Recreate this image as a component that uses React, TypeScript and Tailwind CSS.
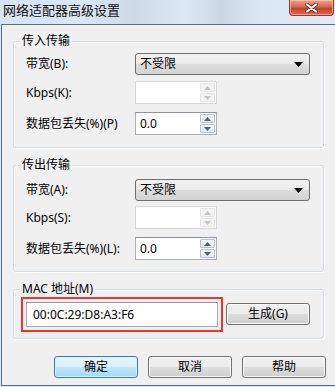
import React from "react";

const uiFont = "font-['Noto_Sans','Noto_Sans_CJK_SC',sans-serif]";

const Arrow = ({ up, color }: { up: boolean; color: string }) => (
  <svg width="7" height="4" viewBox="0 0 7 4">
    <path d={up ? "M0 4h7L3.5 0z" : "M0 0h7L3.5 4z"} fill={color} />
  </svg>
);

const ComboBox = () => (
  <div className="flex h-[22px] w-[175px] items-center justify-between rounded-[3px] border border-[#707070] bg-[linear-gradient(#f2f2f2_0%,#ebebeb_50%,#dddddd_51%,#d3d3d3_100%)] pl-[4px] pr-[6px]">
    <span className="leading-none">不受限</span>
    <svg width="9" height="5" viewBox="0 0 9 5">
      <path d="M0 0h9L4.5 5z" fill="#000" />
    </svg>
  </div>
);

const SpinBox = ({ value, disabled }: { value?: string; disabled?: boolean }) => {
  const arrowColor = disabled ? "#c4c4c4" : "#4c5f80";
  const btn = disabled
    ? "border-[#e3e3e3] bg-[#f4f4f4]"
    : "border-[#b9c2cf] bg-[linear-gradient(#f6f8fb,#e2e8f0)]";
  return (
    <div
      className={`flex h-[23px] w-[82px] border bg-white p-[1px] ${
        disabled ? "border-[#d6d6d6]" : "border-[#abadb3] border-t-[#8e939c]"
      }`}
    >
      <div className="flex-1 pl-[3px] leading-[19px]">{value}</div>
      <div className="flex w-[15px] flex-col gap-px">
        <div className={`flex flex-1 items-center justify-center rounded-[1px] border ${btn}`}>
          <Arrow up color={arrowColor} />
        </div>
        <div className={`flex flex-1 items-center justify-center rounded-[1px] border ${btn}`}>
          <Arrow up={false} color={arrowColor} />
        </div>
      </div>
    </div>
  );
};

const GroupBox = ({
  title,
  className,
  children,
}: {
  title: string;
  className: string;
  children: React.ReactNode;
}) => (
  <div
    className={`relative ml-[11px] w-[311px] rounded-[3px] border border-[#d5dfe5] shadow-[inset_1px_1px_0_#fff,1px_1px_0_#fff] ${className}`}
  >
    <span className="absolute -top-[9px] left-[6px] bg-[#f0f0f0] px-[2px] leading-[16px]">
      {title}
    </span>
    {children}
  </div>
);

const Row = ({ label, children, className = "" }: { label: string; children: React.ReactNode; className?: string }) => (
  <div className={`flex items-center ${className}`}>
    <span className="w-[121px] shrink-0 pl-[12px]">{label}</span>
    {children}
  </div>
);

const Button = ({ label, primary, className = "" }: { label: string; primary?: boolean; className?: string }) => (
  <div
    className={`flex h-[22px] w-[84px] items-center justify-center rounded-[3px] border ${
      primary
        ? "border-[#3c7fb1] bg-[linear-gradient(#eaf6fd_0%,#d9f0fc_50%,#bee6fd_51%,#a7d9f5_100%)] shadow-[inset_0_0_0_1px_#d4efff]"
        : "border-[#707070] bg-[linear-gradient(#f2f2f2_0%,#ebebeb_50%,#dddddd_51%,#cfcfcf_100%)] shadow-[inset_0_0_0_1px_#fbfbfb]"
    } ${className}`}
  >
    {label}
  </div>
);

export default function App() {
  return (
    <div className={`flex h-[387px] w-[335px] flex-col overflow-hidden bg-[#dbe7f5] text-[12px] text-black ${uiFont}`}>
      {/* title bar */}
      <div className="flex h-[24px] items-start justify-between bg-[linear-gradient(90deg,#d6e4f4_0%,#dbe7f5_25%,#ced9e6_40%,#dde8f5_55%,#ccd7e4_66%,#dbe7f5_78%,#dfeaf7_100%)]">
        <span className="pl-[3px] pt-[3px] text-[13px] leading-[15px] text-[#111]">网络适配器高级设置</span>
        <div className="mr-[1px] flex h-[16px] w-[45px] items-center justify-center rounded-b-[4px] border border-t-0 border-[#8e3a2c] bg-[linear-gradient(#e9a08e_0%,#d76a52_45%,#c2432a_55%,#d56b4f_100%)] shadow-[inset_0_0_0_1px_rgba(255,220,200,0.5)]">
          <svg width="13" height="10" viewBox="0 0 13 10">
            <path
              d="M2 1.5 L11 8.5 M11 1.5 L2 8.5"
              stroke="#5a2418"
              strokeWidth="3.6"
              strokeLinecap="round"
            />
            <path
              d="M2 1.5 L11 8.5 M11 1.5 L2 8.5"
              stroke="#fff"
              strokeWidth="2.2"
              strokeLinecap="round"
            />
          </svg>
        </div>
      </div>

      {/* client area */}
      <div className="ml-[1px] flex h-[362px] flex-col border-y border-l border-[#5d6b7d] bg-[#f0f0f0]">
        <GroupBox title="传入传输" className="mt-[16px] h-[107px] pt-[11px]">
          <Row label="带宽(B):">
            <ComboBox />
          </Row>
          <Row label="Kbps(K):" className="mt-[6px]">
            <SpinBox disabled />
          </Row>
          <Row label="数据包丢失(%)(P)" className="mt-[8px]">
            <SpinBox value="0.0" />
          </Row>
        </GroupBox>

        <GroupBox title="传出传输" className="mt-[17px] h-[107px] pt-[13px]">
          <Row label="带宽(A):">
            <ComboBox />
          </Row>
          <Row label="Kbps(S):" className="mt-[5px]">
            <SpinBox disabled />
          </Row>
          <Row label="数据包丢失(%)(L):" className="mt-[8px]">
            <SpinBox value="0.0" />
          </Row>
        </GroupBox>

        <GroupBox title="MAC 地址(M)" className="mt-[17px] flex h-[50px] items-center pl-[7px]">
          <div className="h-[35px] w-[202px] border-2 border-[#ee3535] p-[3px]">
            <div className="h-[25px] border border-[#abadb3] border-t-[#8e939c] bg-white pl-[6px] leading-[23px]">
              00:0C:29:D8:A3:F6
            </div>
          </div>
          <Button label="生成(G)" className="ml-[3px] w-[83px]" />
        </GroupBox>

        <div className="mt-[17px] flex gap-[10px] pl-[52px]">
          <Button label="确定" primary />
          <Button label="取消" />
          <Button label="帮助" />
        </div>
      </div>
    </div>
  );
}
